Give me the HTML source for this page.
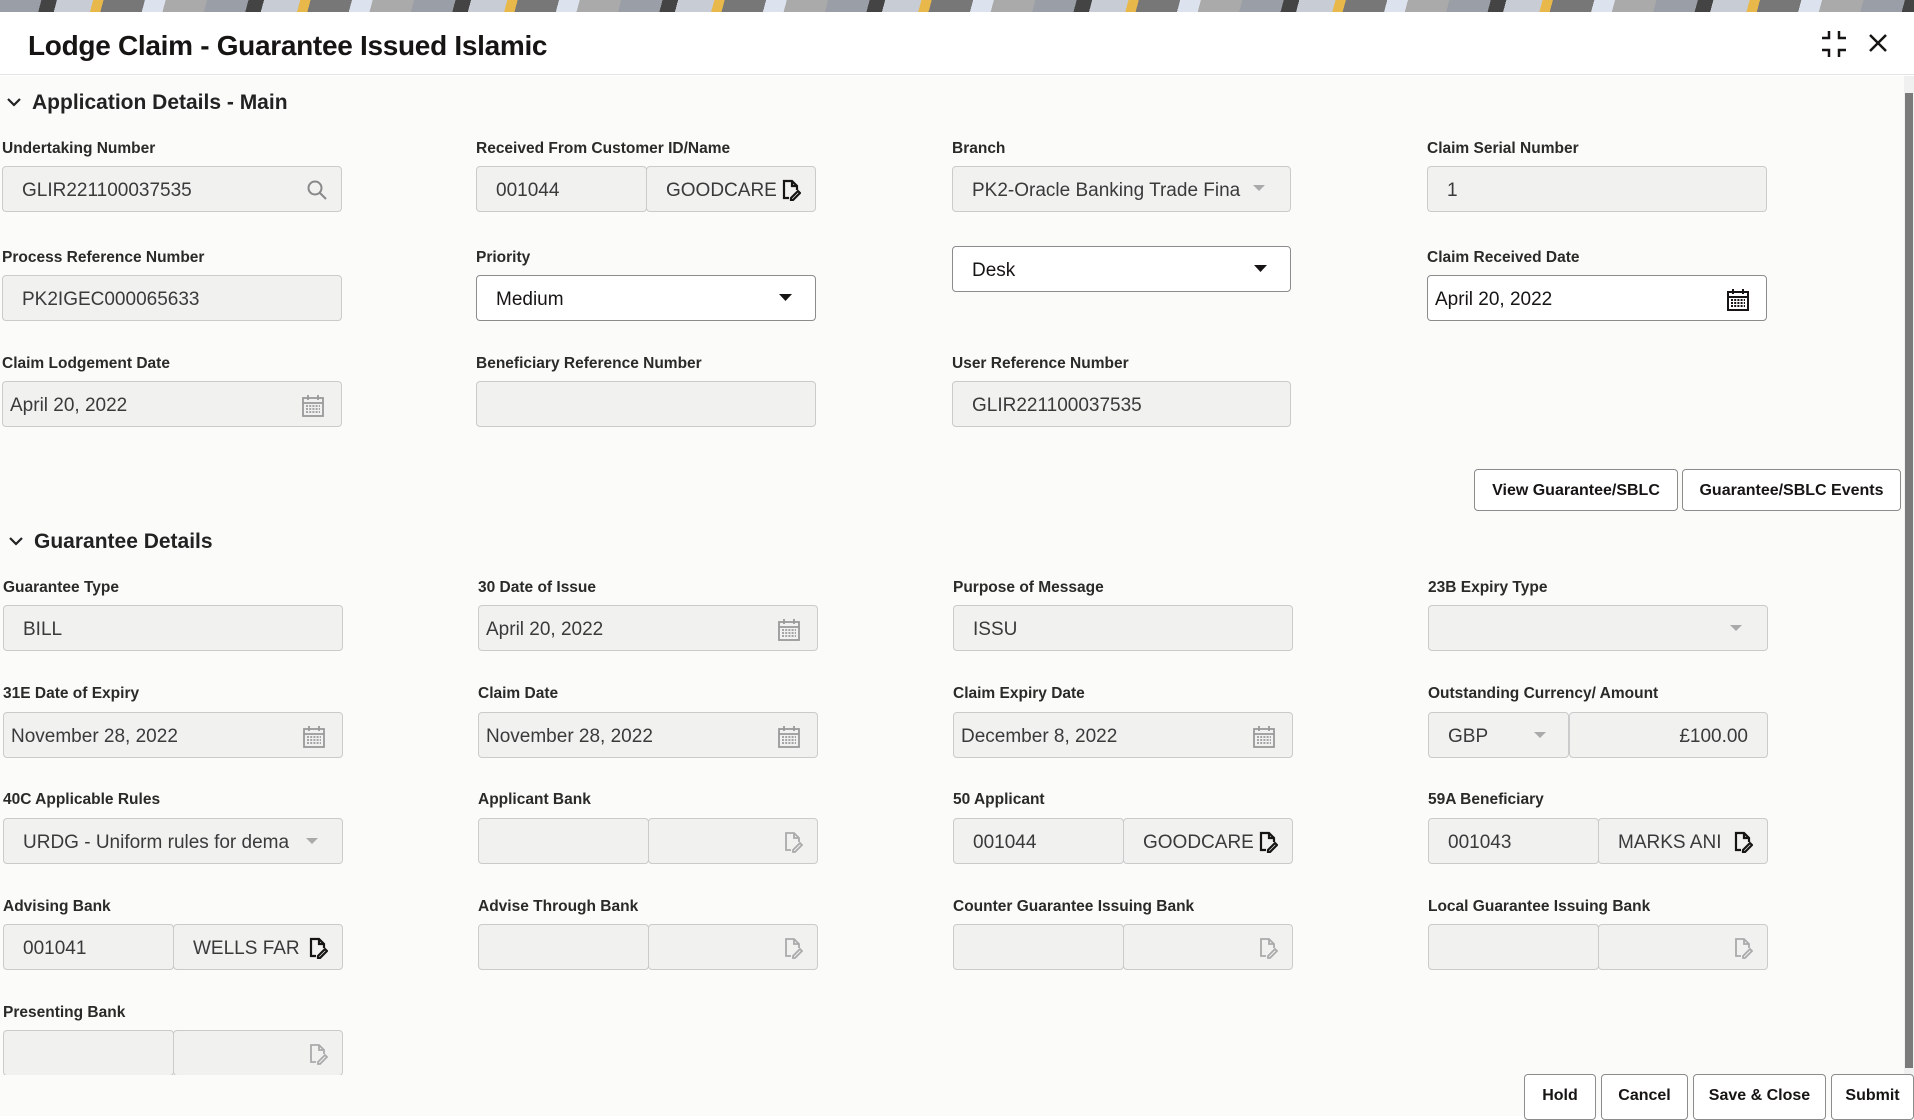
<!DOCTYPE html>
<html><head><meta charset="utf-8">
<style>
*{box-sizing:border-box;margin:0;padding:0}
html,body{width:1914px;height:1116px;overflow:hidden;background:#fff;font-family:"Liberation Sans",sans-serif;color:#161513}
.strip{position:absolute;left:0;top:0;width:1914px;height:12px;background:repeating-linear-gradient(105deg,#9a9ea6 0 40px,#444 40px 55px,#c8ccd4 55px 90px,#e8b94a 90px 100px,#777 100px 140px,#dde3ee 140px 160px,#aaa 160px 200px)}
.hdr{position:absolute;left:0;top:12px;width:1914px;height:63px;background:#fff;border-bottom:1px solid #e4e4e4}
.title{position:absolute;left:28px;top:18px;font-size:28px;font-weight:bold;letter-spacing:-0.3px}
.body{position:absolute;left:0;top:76px;width:1904px;height:1040px;background:#fbfbfa}
.sec{position:absolute;font-size:21px;font-weight:bold;color:#222}
.sec svg{position:absolute;left:-26px;top:6px}
.lbl{position:absolute;font-size:15.5px;font-weight:bold;color:#2a2a28;white-space:nowrap;margin-top:3px}
.inp{position:absolute;height:46px;border:1px solid #cbcbcb;border-radius:4px;background:#f1f1f0;font-size:19px;line-height:48px;padding-left:19px;color:#3a3a3a;white-space:nowrap;overflow:hidden}
.w{background:#fff;border-color:#8c8c8c;color:#161513}
.ic{position:absolute;top:12px}
.btn{position:absolute;height:42px;border:1px solid #8c8c8c;border-radius:4px;background:#fff;font-size:16px;font-weight:bold;line-height:42px;text-align:center;color:#161513}
.sb{position:absolute;left:1904px;top:76px;width:10px;height:1040px;background:#f0f0f0}
.sbt{position:absolute;left:1905px;top:93px;width:8px;height:975px;background:#7a7a7a}
</style></head><body>
<div class="strip"></div>
<div class="hdr">
<div class="title">Lodge Claim - Guarantee Issued Islamic</div>
<svg style="position:absolute;left:1820px;top:18px" width="28" height="28" viewBox="0 0 28 28" fill="none" stroke="#161513" stroke-width="2.5"><path d="M2 8h7V1M19 1v7h7M2 20h7v7M19 27v-7h7"/></svg>
<svg style="position:absolute;left:1868px;top:21px" width="20" height="20" viewBox="0 0 20 20" stroke="#161513" stroke-width="2.5"><path d="M2 2L18 18M18 2L2 18"/></svg>
</div>
<div class="body"></div>
<div class="sb"></div><div class="sbt"></div>

<div class="sec" style="left:32px;top:91px"><svg width="16" height="12" viewBox="0 0 16 12" fill="none" stroke="#222" stroke-width="2.2"><path d="M2 2l6 6 6-6"/></svg>Application Details - Main</div>

<div class="lbl" style="left:2px;top:137px">Undertaking Number</div>
<div class="inp" style="left:2px;top:166px;width:340px">GLIR221100037535<svg class="ic" style="left:303px" width="22" height="22" viewBox="0 0 22 22" fill="none" stroke="#888" stroke-width="2"><circle cx="9" cy="9" r="6.5"/><path d="M14 14l6 6"/></svg></div>

<div class="lbl" style="left:476px;top:137px">Received From Customer ID/Name</div>
<div class="inp" style="left:476px;top:166px;width:171px">001044</div>
<div class="inp" style="left:646px;top:166px;width:170px;color:#3a3a3a">GOODCARE<svg class="ic" style="left:134px" width="20" height="22" viewBox="0 0 20 22" fill="none" stroke="#161513" stroke-width="2.2"><path d="M8 19H3V2h8l5 5v4M11 2v5h5M10 19l7-7 2 2-7 7h-2z"/></svg></div>

<div class="lbl" style="left:952px;top:137px">Branch</div>
<div class="inp" style="left:952px;top:166px;width:339px">PK2-Oracle Banking Trade Fina<svg class="ic" style="left:300px;top:18px" width="12" height="8"><path d="M0 0h12L6 6z" fill="#aaa"/></svg></div>

<div class="lbl" style="left:1427px;top:137px">Claim Serial Number</div>
<div class="inp" style="left:1427px;top:166px;width:340px">1</div>

<div class="lbl" style="left:2px;top:246px">Process Reference Number</div>
<div class="inp" style="left:2px;top:275px;width:340px">PK2IGEC000065633</div>

<div class="lbl" style="left:476px;top:246px">Priority</div>
<div class="inp w" style="left:476px;top:275px;width:340px">Medium<svg class="ic" style="left:302px;top:18px" width="13" height="8"><path d="M0 0h13L6.5 7z" fill="#161513"/></svg></div>

<div class="inp w" style="left:952px;top:246px;width:339px">Desk<svg class="ic" style="left:301px;top:18px" width="13" height="8"><path d="M0 0h13L6.5 7z" fill="#161513"/></svg></div>

<div class="lbl" style="left:1427px;top:246px">Claim Received Date</div>
<div class="inp w" style="left:1427px;top:275px;width:340px;padding-left:7px">April 20, 2022<svg class="ic" style="left:298px" width="24" height="24" viewBox="0 0 24 24" fill="none" stroke="#161513" stroke-width="2"><rect x="2" y="4" width="20" height="18"/><path d="M7 1v5M17 1v5M2 9h20"/><path d="M5 12h14M5 15h14M5 18h14" stroke-dasharray="2 1.2" stroke-width="2"/></svg></div>

<div class="lbl" style="left:2px;top:352px">Claim Lodgement Date</div>
<div class="inp" style="left:2px;top:381px;width:340px;padding-left:7px">April 20, 2022<svg class="ic" style="left:298px" width="24" height="24" viewBox="0 0 24 24" fill="none" stroke="#999" stroke-width="1.8"><rect x="2" y="4" width="20" height="18"/><path d="M7 1v5M17 1v5M2 9h20"/><path d="M5 12h14M5 15h14M5 18h14" stroke-dasharray="2 1.2"/></svg></div>

<div class="lbl" style="left:476px;top:352px">Beneficiary Reference Number</div>
<div class="inp" style="left:476px;top:381px;width:340px"></div>

<div class="lbl" style="left:952px;top:352px">User Reference Number</div>
<div class="inp" style="left:952px;top:381px;width:339px">GLIR221100037535</div>

<div class="btn" style="left:1474px;top:469px;width:204px">View Guarantee/SBLC</div>
<div class="btn" style="left:1682px;top:469px;width:219px">Guarantee/SBLC Events</div>

<div class="sec" style="left:34px;top:530px"><svg width="16" height="12" viewBox="0 0 16 12" fill="none" stroke="#222" stroke-width="2.2"><path d="M2 2l6 6 6-6"/></svg>Guarantee Details</div>

<div class="lbl" style="left:3px;top:576px">Guarantee Type</div>
<div class="inp" style="left:3px;top:605px;width:340px">BILL</div>
<div class="lbl" style="left:478px;top:576px">30 Date of Issue</div>
<div class="inp" style="left:478px;top:605px;width:340px;padding-left:7px">April 20, 2022<svg class="ic" style="left:298px" width="24" height="24" viewBox="0 0 24 24" fill="none" stroke="#999" stroke-width="1.8"><rect x="2" y="4" width="20" height="18"/><path d="M7 1v5M17 1v5M2 9h20"/><path d="M5 12h14M5 15h14M5 18h14" stroke-dasharray="2 1.2"/></svg></div>
<div class="lbl" style="left:953px;top:576px">Purpose of Message</div>
<div class="inp" style="left:953px;top:605px;width:340px">ISSU</div>
<div class="lbl" style="left:1428px;top:576px">23B Expiry Type</div>
<div class="inp" style="left:1428px;top:605px;width:340px"><svg class="ic" style="left:301px;top:19px" width="12" height="7"><path d="M0 0h12L6 6z" fill="#aaa"/></svg></div>

<div class="lbl" style="left:3px;top:682px">31E Date of Expiry</div>
<div class="inp" style="left:3px;top:712px;width:340px;padding-left:7px">November 28, 2022<svg class="ic" style="left:298px" width="24" height="24" viewBox="0 0 24 24" fill="none" stroke="#999" stroke-width="1.8"><rect x="2" y="4" width="20" height="18"/><path d="M7 1v5M17 1v5M2 9h20"/><path d="M5 12h14M5 15h14M5 18h14" stroke-dasharray="2 1.2"/></svg></div>
<div class="lbl" style="left:478px;top:682px">Claim Date</div>
<div class="inp" style="left:478px;top:712px;width:340px;padding-left:7px">November 28, 2022<svg class="ic" style="left:298px" width="24" height="24" viewBox="0 0 24 24" fill="none" stroke="#999" stroke-width="1.8"><rect x="2" y="4" width="20" height="18"/><path d="M7 1v5M17 1v5M2 9h20"/><path d="M5 12h14M5 15h14M5 18h14" stroke-dasharray="2 1.2"/></svg></div>
<div class="lbl" style="left:953px;top:682px">Claim Expiry Date</div>
<div class="inp" style="left:953px;top:712px;width:340px;padding-left:7px">December 8, 2022<svg class="ic" style="left:298px" width="24" height="24" viewBox="0 0 24 24" fill="none" stroke="#999" stroke-width="1.8"><rect x="2" y="4" width="20" height="18"/><path d="M7 1v5M17 1v5M2 9h20"/><path d="M5 12h14M5 15h14M5 18h14" stroke-dasharray="2 1.2"/></svg></div>
<div class="lbl" style="left:1428px;top:682px">Outstanding Currency/ Amount</div>
<div class="inp" style="left:1428px;top:712px;width:141px">GBP<svg class="ic" style="left:105px;top:19px" width="12" height="7"><path d="M0 0h12L6 6z" fill="#aaa"/></svg></div>
<div class="inp" style="left:1569px;top:712px;width:199px;text-align:right;padding-right:19px">£100.00</div>

<div class="lbl" style="left:3px;top:788px">40C Applicable Rules</div>
<div class="inp" style="left:3px;top:818px;width:340px">URDG - Uniform rules for dema<svg class="ic" style="left:302px;top:19px" width="12" height="7"><path d="M0 0h12L6 6z" fill="#aaa"/></svg></div>
<div class="lbl" style="left:478px;top:788px">Applicant Bank</div>
<div class="inp" style="left:478px;top:818px;width:171px"></div>
<div class="inp" style="left:648px;top:818px;width:170px"><svg class="ic" style="left:134px" width="20" height="22" viewBox="0 0 20 22" fill="none" stroke="#aaa" stroke-width="1.8"><path d="M8 19H3V2h8l5 5v4M11 2v5h5M10 19l7-7 2 2-7 7h-2z"/></svg></div>
<div class="lbl" style="left:953px;top:788px">50 Applicant</div>
<div class="inp" style="left:953px;top:818px;width:171px">001044</div>
<div class="inp" style="left:1123px;top:818px;width:170px">GOODCARE<svg class="ic" style="left:134px" width="20" height="22" viewBox="0 0 20 22" fill="none" stroke="#161513" stroke-width="2.2"><path d="M8 19H3V2h8l5 5v4M11 2v5h5M10 19l7-7 2 2-7 7h-2z"/></svg></div>
<div class="lbl" style="left:1428px;top:788px">59A Beneficiary</div>
<div class="inp" style="left:1428px;top:818px;width:171px">001043</div>
<div class="inp" style="left:1598px;top:818px;width:170px">MARKS ANI<svg class="ic" style="left:134px" width="20" height="22" viewBox="0 0 20 22" fill="none" stroke="#161513" stroke-width="2.2"><path d="M8 19H3V2h8l5 5v4M11 2v5h5M10 19l7-7 2 2-7 7h-2z"/></svg></div>

<div class="lbl" style="left:3px;top:895px">Advising Bank</div>
<div class="inp" style="left:3px;top:924px;width:171px">001041</div>
<div class="inp" style="left:173px;top:924px;width:170px">WELLS FAR<svg class="ic" style="left:134px" width="20" height="22" viewBox="0 0 20 22" fill="none" stroke="#161513" stroke-width="2.2"><path d="M8 19H3V2h8l5 5v4M11 2v5h5M10 19l7-7 2 2-7 7h-2z"/></svg></div>
<div class="lbl" style="left:478px;top:895px">Advise Through Bank</div>
<div class="inp" style="left:478px;top:924px;width:171px"></div>
<div class="inp" style="left:648px;top:924px;width:170px"><svg class="ic" style="left:134px" width="20" height="22" viewBox="0 0 20 22" fill="none" stroke="#aaa" stroke-width="1.8"><path d="M8 19H3V2h8l5 5v4M11 2v5h5M10 19l7-7 2 2-7 7h-2z"/></svg></div>
<div class="lbl" style="left:953px;top:895px">Counter Guarantee Issuing Bank</div>
<div class="inp" style="left:953px;top:924px;width:171px"></div>
<div class="inp" style="left:1123px;top:924px;width:170px"><svg class="ic" style="left:134px" width="20" height="22" viewBox="0 0 20 22" fill="none" stroke="#aaa" stroke-width="1.8"><path d="M8 19H3V2h8l5 5v4M11 2v5h5M10 19l7-7 2 2-7 7h-2z"/></svg></div>
<div class="lbl" style="left:1428px;top:895px">Local Guarantee Issuing Bank</div>
<div class="inp" style="left:1428px;top:924px;width:171px"></div>
<div class="inp" style="left:1598px;top:924px;width:170px"><svg class="ic" style="left:134px" width="20" height="22" viewBox="0 0 20 22" fill="none" stroke="#aaa" stroke-width="1.8"><path d="M8 19H3V2h8l5 5v4M11 2v5h5M10 19l7-7 2 2-7 7h-2z"/></svg></div>

<div class="lbl" style="left:3px;top:1001px">Presenting Bank</div>
<div style="position:absolute;left:0;top:1030px;width:360px;height:45px;overflow:hidden">
<div class="inp" style="left:3px;top:0;width:171px"></div>
<div class="inp" style="left:173px;top:0;width:170px"><svg class="ic" style="left:134px" width="20" height="22" viewBox="0 0 20 22" fill="none" stroke="#aaa" stroke-width="1.8"><path d="M8 19H3V2h8l5 5v4M11 2v5h5M10 19l7-7 2 2-7 7h-2z"/></svg></div>
</div>

<div class="btn" style="left:1524px;top:1074px;width:72px;height:46px">Hold</div>
<div class="btn" style="left:1601px;top:1074px;width:87px;height:46px">Cancel</div>
<div class="btn" style="left:1693px;top:1074px;width:133px;height:46px">Save &amp; Close</div>
<div class="btn" style="left:1831px;top:1074px;width:83px;height:46px">Submit</div>
</body></html>
